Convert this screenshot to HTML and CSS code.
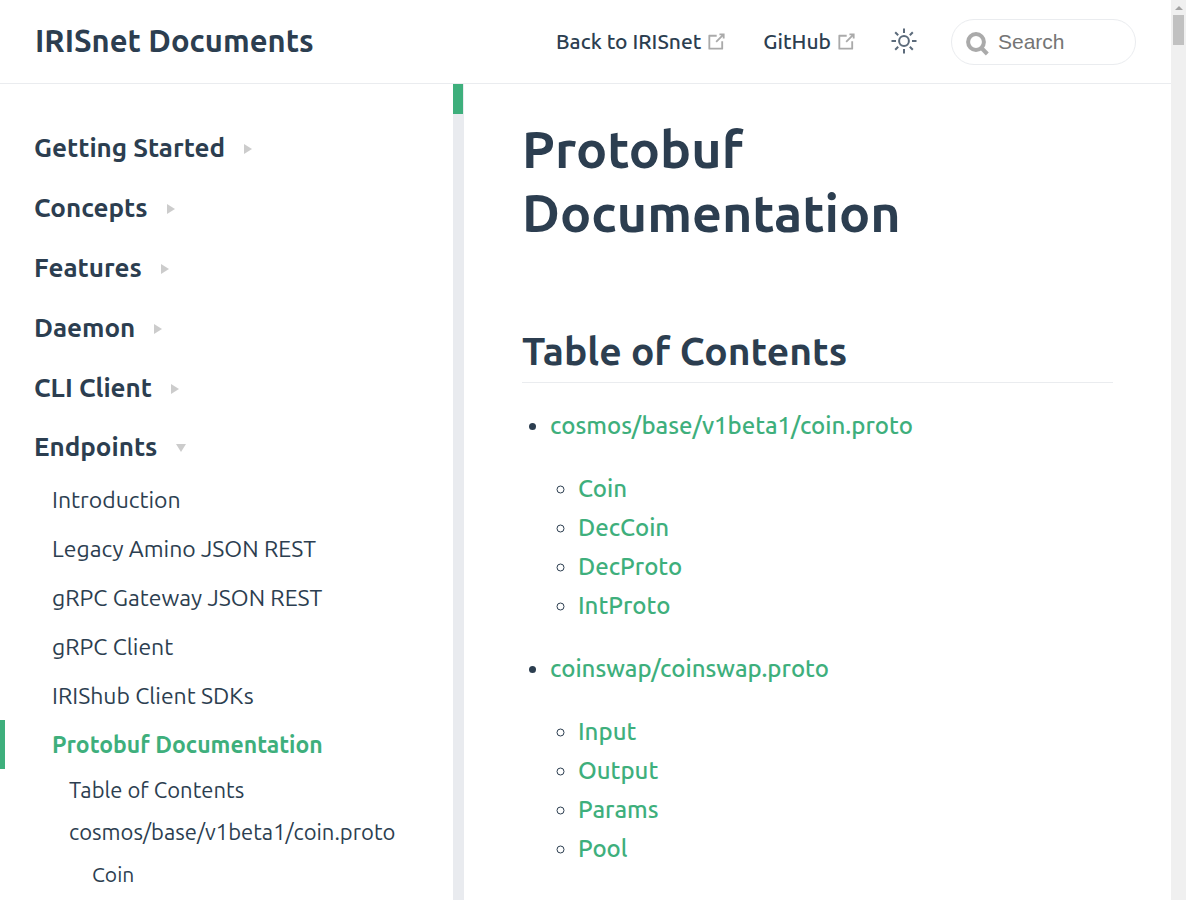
FILE: index.html
```
<!DOCTYPE html>
<html lang="en">
<head>
<meta charset="utf-8">
<meta name="viewport" content="width=device-width, initial-scale=1">
<title>Protobuf Documentation | IRISnet Documents</title>
<link rel="stylesheet" href="styles.css">
</head>
<body>
<div class="page">
  <header class="navbar">
    <a class="site-name" href="#">IRISnet Documents</a>
    <nav class="nav-links">
      <a class="nav-link" href="#">Back to IRISnet
        <svg class="outbound" viewBox="0 0 100 100" aria-hidden="true"><path d="M18.8 85.1h56c2.2 0 4-1.8 4-4v-32h-8v28h-48v-48h28v-8h-32c-2.2 0-4 1.8-4 4v56c0 2.200 1.800 4 4 4z"/><path d="M45.700 48.700 51.300 54.300 77.200 28.500 77.200 37.200 85.200 37.200 85.200 14.900 62.800 14.900 62.800 22.900 71.500 22.900z"/></svg></a>
      <a class="nav-link" href="#">GitHub
        <svg class="outbound" viewBox="0 0 100 100" aria-hidden="true"><path d="M18.8 85.1h56c2.2 0 4-1.8 4-4v-32h-8v28h-48v-48h28v-8h-32c-2.2 0-4 1.8-4 4v56c0 2.200 1.800 4 4 4z"/><path d="M45.700 48.700 51.300 54.300 77.200 28.500 77.200 37.200 85.200 37.200 85.200 14.900 62.800 14.900 62.800 22.900 71.500 22.900z"/></svg></a>
    </nav>
    <button class="theme-button" type="button" aria-label="Toggle theme">
      <svg class="sun" viewBox="0 0 26 26" aria-hidden="true"><circle cx="13" cy="13" r="4.900"/><path d="M13 .5v4.500M13 21v4.500M.5 13H5M21 13h4.500M4.200 4.200l3 3M18.800 18.800l3 3M4.200 21.800l3-3M18.800 7.200l3-3"/></svg>
    </button>
    <label class="search">
      <svg class="search-icon" viewBox="0 0 23 24" aria-hidden="true"><circle cx="10" cy="10" r="7.900"/><path d="M15.500 16l5.800 6"/></svg>
      <input class="search-input" type="text" placeholder="Search" aria-label="Search">
    </label>
  </header>
  <div class="columns">
    <aside class="sidebar">
      <nav class="sidebar-links">
        <a class="group" href="#">Getting Started<span class="arrow right"></span></a>
        <a class="group" href="#">Concepts<span class="arrow right"></span></a>
        <a class="group" href="#">Features<span class="arrow right"></span></a>
        <a class="group" href="#">Daemon<span class="arrow right"></span></a>
        <a class="group" href="#">CLI Client<span class="arrow right"></span></a>
        <a class="group open" href="#">Endpoints<span class="arrow down"></span></a>
        <a class="item" href="#">Introduction</a>
        <a class="item" href="#">Legacy Amino JSON REST</a>
        <a class="item" href="#">gRPC Gateway JSON REST</a>
        <a class="item" href="#">gRPC Client</a>
        <a class="item" href="#">IRIShub Client SDKs</a>
        <a class="item active" href="#">Protobuf Documentation</a>
        <a class="subitem" href="#">Table of Contents</a>
        <a class="subitem" href="#">cosmos/base/v1beta1/coin.proto</a>
        <a class="subitem deep" href="#">Coin</a>
      </nav>
      <div class="sidebar-track"><div class="sidebar-thumb"></div></div>
    </aside>
    <main class="content">
      <h1 class="title">Protobuf Documentation</h1>
      <h2 class="section-title">Table of Contents</h2>
      <ul class="toc">
        <li><a class="toc-link" href="#">cosmos/base/v1beta1/coin.proto</a>
          <ul class="toc-sub">
            <li><a class="toc-link" href="#">Coin</a></li>
            <li><a class="toc-link" href="#">DecCoin</a></li>
            <li><a class="toc-link" href="#">DecProto</a></li>
            <li><a class="toc-link" href="#">IntProto</a></li>
          </ul>
        </li>
        <li><a class="toc-link" href="#">coinswap/coinswap.proto</a>
          <ul class="toc-sub">
            <li><a class="toc-link" href="#">Input</a></li>
            <li><a class="toc-link" href="#">Output</a></li>
            <li><a class="toc-link" href="#">Params</a></li>
            <li><a class="toc-link" href="#">Pool</a></li>
          </ul>
        </li>
      </ul>
    </main>
  </div>
</div>
<div class="window-track"><span class="arrow up"></span><div class="window-thumb"></div></div>
</body>
</html>
```
FILE: styles.css
```
* { box-sizing: border-box; }

body {
  margin: 0;
  height: 100vh;
  display: flex;
  overflow: hidden;
  background: #fff;
  color: #2c3e50;
  font-family: Ubuntu, "Open Sans", "Noto Sans", sans-serif;
  font-size: 23px;
}

a { color: inherit; text-decoration: none; }

.page {
  flex: 1;
  min-width: 0;
  display: flex;
  flex-direction: column;
}

.navbar {
  flex: none;
  display: flex;
  align-items: center;
  height: 84px;
  padding: 0 35px;
  border-bottom: 1px solid #eaecef;
}

.site-name {
  margin-right: auto;
  padding-bottom: 2px;
  font-size: 31px;
  font-weight: 700;
  line-height: 36px;
}

.nav-links { display: flex; gap: 35px; padding-bottom: 1px; }

.nav-link {
  display: flex;
  align-items: center;
  gap: 4px;
  font-size: 21px;
  font-weight: 500;
  white-space: nowrap;
}

.outbound { width: 23px; height: 23px; fill: #aaa; }

.theme-button {
  display: flex;
  margin: 0 34px 0 33px;
  padding: 0 0 1px;
  border: 0;
  background: none;
}

.sun {
  width: 26px;
  height: 26px;
  fill: none;
  stroke: #5c6b7b;
  stroke-width: 2;
}

.search {
  display: flex;
  align-items: center;
  gap: 9px;
  width: 185px;
  height: 46px;
  padding: 0 14px;
  border: 1px solid #eaecef;
  border-radius: 23px;
}

.search-icon {
  flex: none;
  width: 23px;
  height: 24px;
  margin-top: 4px;
  fill: none;
  stroke: #aaa;
  stroke-width: 4;
}

.search-input {
  width: 100%;
  min-width: 0;
  padding: 0;
  border: 0;
  outline: 0;
  background: none;
  color: #4e6e8e;
  font: 21px "Liberation Sans", Arial, sans-serif;
}

.search-input::placeholder { color: #757575; }

.columns { flex: 1; display: flex; min-height: 0; }

.sidebar {
  flex: none;
  display: flex;
  width: 464px;
}

.sidebar-links {
  flex: 1;
  display: flex;
  flex-direction: column;
  padding-top: 33px;
  overflow: hidden;
}

.group {
  flex: none;
  display: flex;
  align-items: center;
  gap: 19px;
  height: 60px;
  padding-left: 34px;
  font-size: 26px;
  font-weight: 700;
}

.group.open { height: 58px; }

.arrow { width: 0; height: 0; border: 0 solid transparent; }
.arrow.right { border-width: 5px 0 5px 8px; border-left-color: #ccc; margin-top: 4px; }
.arrow.down { border-width: 8px 5px 0; border-top-color: #ccc; margin-top: 4px; }
.arrow.up { border-width: 0 4px 4px; border-bottom-color: #a3a3a3; }

.item {
  flex: none;
  padding-left: 47px;
  border-left: 5px solid transparent;
  line-height: 49px;
}

.item.active {
  border-left-color: #3eaf7c;
  color: #3eaf7c;
  font-weight: 700;
}

.subitem {
  flex: none;
  padding-left: 69px;
  font-size: 22px;
  line-height: 42px;
}

.subitem.deep { padding-left: 92px; font-size: 21px; }

.sidebar-track { flex: none; width: 11px; background: #e9ebef; }
.sidebar-thumb { width: 10px; height: 30px; background: #3eaf7c; }

.content {
  flex: 1;
  min-width: 0;
  padding: 33px 58px 0;
  overflow: hidden;
}

.title {
  max-width: 480px;
  margin: 0;
  font-size: 52px;
  font-weight: 700;
  line-height: 64px;
}

.section-title {
  margin: 82px 0 0;
  padding-bottom: 7px;
  border-bottom: 1px solid #eaecef;
  font-size: 39px;
  font-weight: 700;
  line-height: 48px;
}

.toc {
  margin: 23px 0 0;
  padding-left: 28px;
  line-height: 39px;
}

.toc-sub {
  margin: 24px 0;
  padding-left: 28px;
}

.toc-link { color: #3eaf7c; font-size: 24px; font-weight: 500; }

.window-track {
  flex: none;
  display: flex;
  flex-direction: column;
  align-items: center;
  gap: 5px;
  width: 15px;
  padding-top: 6px;
  background: #f0f0f0;
}

.window-thumb { width: 11px; height: 30px; background: #c1c1c1; }
```
